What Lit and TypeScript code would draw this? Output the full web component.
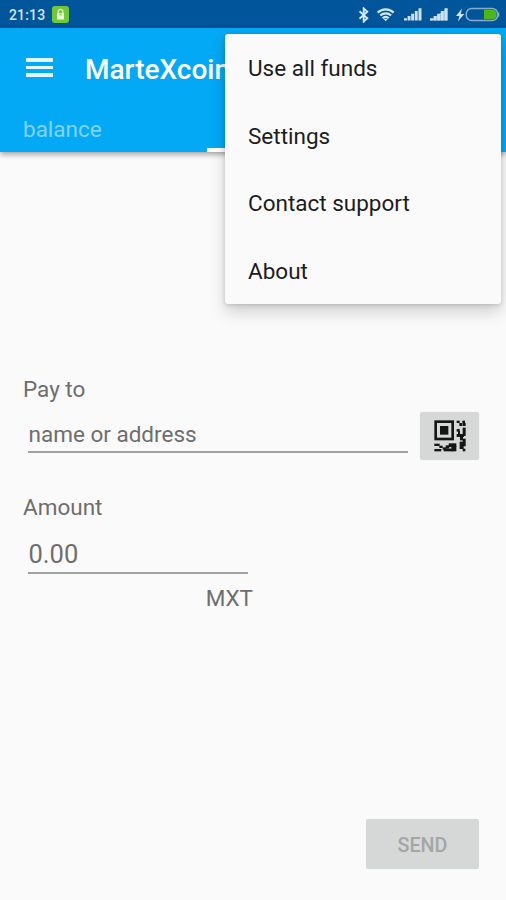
import { LitElement, html, css, svg } from "lit";
import { customElement, property } from "lit/decorators.js";

const QR_BLOCKS: number[][] = [
  [118, 92, 25, 26],
  [168, 76, 9, 7], [176, 83, 9, 9], [185, 76, 8, 7], [186, 83, 9, 9],
  [186, 97, 9, 25], [168, 101, 9, 8], [168, 116, 22, 9], [172, 107, 6, 9],
  [178, 123, 9, 12], [186, 130, 9, 23], [177, 139, 12, 22], [186, 160, 8, 8],
  [101, 145, 16, 7], [116, 151, 10, 7], [101, 161, 21, 7],
  [126, 156, 11, 7], [135, 150, 11, 10], [144, 144, 23, 11], [152, 152, 15, 16], [129, 160, 27, 8],
];

@customElement("status-bar")
export class StatusBar extends LitElement {
  static styles = css`
    :host { display: flex; align-items: center; height: 28px; padding: 1px 6px 0 9px; box-sizing: border-box;
      background: #01569b; color: #d3e4f3; }
    .time { font: 500 14px/20px Roboto, sans-serif; letter-spacing: 0.15px; width: 42.500px; }
    .spacer { flex: 1; }
    .bluetooth { margin-right: 4px; }
    svg { display: block; flex: none; }
  `;
  private signal() {
    return svg`<path d="M0 13.400h2.900v-2.200H0zM3.600 13.400h2.900V9H3.600zM7.200 13.400h2.900V6.700H7.200zM10.800 13.400h2.900V4.100h-2.900zM14.500 13.400h3V1.300h-3z" fill="#cfe0f0"/>`;
  }
  render() {
    return html`
      <span class="time">21:13</span>
      <svg width="17" height="17" viewBox="0 0 17 17">
        <rect width="17" height="17" rx="3" fill="#72c936"/>
        <path d="M6.200 7.500V5.600a2.300 2.300 0 0 1 4.600 0v1.900" fill="none" stroke="#e6fbd6" stroke-width="1.200"/>
        <rect x="5" y="7" width="7" height="6.500" rx=".6" fill="#eaffdc"/>
        <rect x="7.300" y="7.500" width="2.400" height="2" fill="#8ed65c"/>
      </svg>
      <span class="spacer"></span>
      <svg class="bluetooth" width="12" height="16" viewBox="0 0 12 16">
        <path d="M1.500 4.200 9.300 11.300 5.700 14.600V1.400l3.600 3.300L1.500 11.800" fill="none" stroke="#d3e4f3" stroke-width="1.900"/>
      </svg>
      <svg width="30" height="16" viewBox="0 0 30 16">
        <g transform="translate(3 0)" fill="none" stroke="#d3e4f3" stroke-width="2.200">
          <path d="M.7 5.600a11.500 11.500 0 0 1 16 0M3.300 8.500a7.800 7.800 0 0 1 10.800 0M5.700 11.200a4.200 4.200 0 0 1 6 0"/>
          <path d="m6.500 11.700 2.200 2.500 2.200-2.500z" fill="#d3e4f3" stroke="none"/>
        </g>
      </svg>
      <svg width="26" height="15" viewBox="0 0 26 15">${this.signal()}</svg>
      <svg width="26" height="15" viewBox="0 0 26 15">
        <path d="M0 13.400 17.500 1.300v12.100z" fill="#8fb4d6"/>${this.signal()}
      </svg>
      <svg width="9" height="14" viewBox="0 0 9 14"><path d="M6 .6 0 7.900h3.400L1.900 13.500 8.200 5.900H4.700z" fill="#d3e4f3"/></svg>
      <svg width="35" height="15" viewBox="0 0 35 15">
        <rect x="1.300" y="1.500" width="31.300" height="12" rx="5.300" fill="none" stroke="#86add0" stroke-width="1.500"/>
        <path d="M19 2.800h8.300a3.500 3.500 0 0 1 4 3.200v3a3.500 3.500 0 0 1-4 3.200H19z" fill="#4bb815"/>
        <rect x="33" y="5.500" width="1.300" height="4.200" fill="#86add0"/>
      </svg>
    `;
  }
}

@customElement("app-header")
export class AppHeader extends LitElement {
  static styles = css`
    :host { display: block; height: 124px; background: #03a9f4; color: #fff; font-family: Roboto, sans-serif;
      box-shadow: 0 2px 6px rgba(0, 0, 0, 0.4); }
    .bar { display: flex; align-items: center; height: 79px; padding-left: 26px; gap: 32px; }
    .burger { display: flex; flex-direction: column; gap: 4px; width: 27px; }
    .burger i { height: 3.500px; background: #e2f6ff; }
    .title { font-weight: 500; font-size: 28px; line-height: 34px; white-space: nowrap; padding-top: 4px; }
    .tabs { display: flex; height: 45px; }
    .tab { box-sizing: border-box; width: 207px; padding: 7px 23px 0; font-size: 22.500px; line-height: 30px;
      color: #80d3f9; }
    .tab.active { width: 92px; border-bottom: 4px solid #fff; }
  `;
  render() {
    return html`
      <div class="bar">
        <div class="burger"><i></i><i></i><i></i></div>
        <div class="title">MarteXcoin</div>
      </div>
      <div class="tabs"><div class="tab">balance</div><div class="tab active"></div></div>
    `;
  }
}

@customElement("overflow-menu")
export class OverflowMenu extends LitElement {
  @property({ attribute: false }) items: string[] = [];
  static styles = css`
    :host { display: block; width: 276px; background: #fafafa; border-radius: 3px;
      box-shadow: 0 8px 16px rgba(0, 0, 0, 0.17), 0 1px 4px rgba(0, 0, 0, 0.16); }
    .item { display: flex; align-items: center; height: 67.500px; padding: 1px 23px 0; box-sizing: border-box;
      font: 400 22.500px/30px Roboto, sans-serif; color: #1c1c1c; }
  `;
  render() {
    return this.items.map((label) => html`<div class="item">${label}</div>`);
  }
}

@customElement("app-root")
export class AppRoot extends LitElement {
  private menuItems = ["Use all funds", "Settings", "Contact support", "About"];
  static styles = css`
    :host { display: block; position: relative; height: 900px; overflow: hidden; background: #fafafa;
      font-family: Roboto, sans-serif; color: #6e6e6e; font-size: 22.500px; line-height: 30px; }
    .screen { display: flex; flex-direction: column; height: 100%; }
    .form { flex: 1; display: flex; flex-direction: column; padding: 222px 27px 31px 23px; }
    .row { display: flex; justify-content: space-between; margin-top: 8px; }
    .field { margin-left: 5px; padding-left: 0.500px; border-bottom: 2px solid #a0a0a0; box-sizing: border-box; }
    .address { width: 380px; height: 41px; padding-top: 7px; }
    .amount-label { margin-top: 32px; }
    .amount { width: 220px; height: 52px; padding-top: 17px; font-size: 25.500px; }
    .qr { display: flex; align-items: center; justify-content: center; width: 59px; height: 48px;
      border-radius: 3px; background: #d6d8d7; box-shadow: 0 0 1px #d6d8d7; }
    .unit { width: 230px; text-align: right; margin-top: 9px; }
    .send { margin-top: auto; align-self: flex-end; width: 113px; height: 50px; border-radius: 2px;
      background: #d6d8d7; color: #a4a6a5; text-align: center; font-size: 19.700px; line-height: 53px; font-weight: 500; }
    .menu { position: absolute; top: 34px; right: 5px; }
  `;
  render() {
    return html`
      <div class="screen">
        <status-bar></status-bar>
        <app-header></app-header>
        <div class="form">
          <div class="label">Pay to</div>
          <div class="row">
            <div class="field address">name or address</div>
            <div class="qr">
              <svg width="32" height="32" viewBox="100 74 96 96" fill="#151515">
                <rect x="105" y="79" width="51" height="52" fill="none" stroke="#151515" stroke-width="8"/>
                ${QR_BLOCKS.map(([x, y, w, h]) => svg`<rect x=${x} y=${y} width=${w} height=${h} />`)}
              </svg>
            </div>
          </div>
          <div class="label amount-label">Amount</div>
          <div class="field amount">0.00</div>
          <div class="unit">MXT</div>
          <div class="send">SEND</div>
        </div>
      </div>
      <overflow-menu class="menu" .items=${this.menuItems}></overflow-menu>
    `;
  }
}
